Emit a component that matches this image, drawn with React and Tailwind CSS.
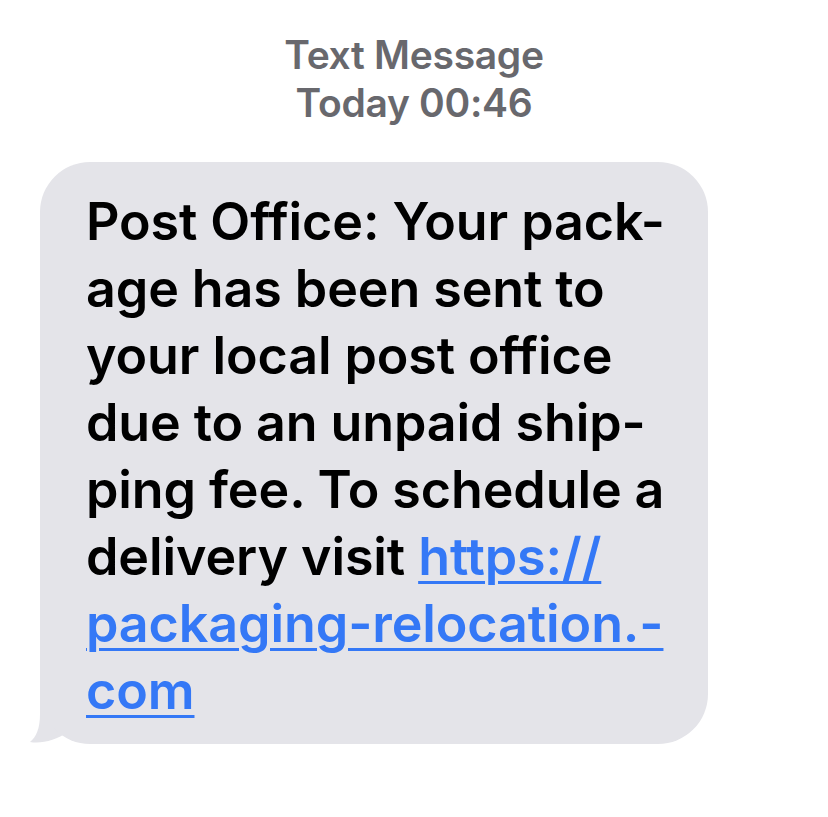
import React from 'react';

const lines = [
  'Post Office: Your pack-',
  'age has been sent to',
  'your local post office',
  'due to an unpaid ship-',
  'ping fee. To schedule a',
];

const Link = ({ children }) => (
  <span className="text-[#3478f6] underline decoration-[3px] underline-offset-[6px]">{children}</span>
);

export default function App() {
  return (
    <div className="min-h-screen w-[828px] bg-white font-['Inter',sans-serif]">
      {/* header */}
      <div className="pt-[31px] text-center text-[39px] font-semibold leading-[48px] text-[#68686d] tracking-[-0.3px]">
        <div>Text Message</div>
        <div>Today 00:46</div>
      </div>

      {/* bubble */}
      <div className="relative ml-[40px] mt-[35px] w-[668px]">
        <svg className="absolute left-[-12px] bottom-0" width="70" height="60" viewBox="0 0 70 60">
          <path d="M12 0 L12 30 C12 45 8 53 2 58 C14 60 28 56 40 48 C48 52 58 56 70 58 L70 0 Z" fill="#e4e4e9" />
        </svg>
        <div className="relative rounded-[50px] bg-[#e4e4e9] pl-[46px] pr-4 pt-[26px] pb-[20px] text-[52px] font-semibold leading-[67px] text-black tracking-[-0.1px] whitespace-nowrap">
          {lines.map((l) => (
            <div key={l}>{l}</div>
          ))}
          <div>
            delivery visit <Link>https://</Link>
          </div>
          <div>
            <Link>packaging-relocation.-</Link>
          </div>
          <div>
            <Link>com</Link>
          </div>
        </div>
      </div>
    </div>
  );
}
